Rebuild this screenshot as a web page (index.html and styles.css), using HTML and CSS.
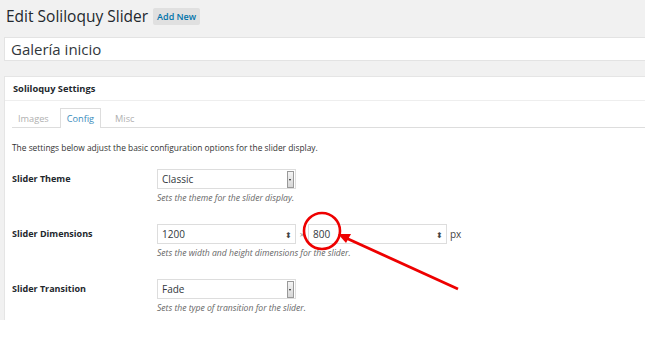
FILE: index.html
```html
<!DOCTYPE html>
<html>
<head>
<meta charset="utf-8">
<link rel="stylesheet" href="styles.css">
</head>
<body>
<div class="screen">
  <div class="wrap">
    <div class="heading">
      <h1 class="title">Edit Soliloquy Slider</h1>
      <span class="add-new">Add New</span>
    </div>
    <div class="title-field">Galería inicio</div>
    <div class="postbox">
      <div class="postbox-head">Soliloquy Settings</div>
      <div class="postbox-body">
        <div class="tabs">
          <span class="tab">Images</span>
          <span class="tab tab-active">Config</span>
          <span class="tab">Misc</span>
        </div>
        <p class="intro">The settings below adjust the basic configuration options for the slider display.</p>
        <div class="row">
          <div class="label">Slider Theme</div>
          <div class="field">
            <div class="select"><span>Classic</span><span class="select-btn"></span></div>
            <div class="desc">Sets the theme for the slider display.</div>
          </div>
        </div>
        <div class="row">
          <div class="label">Slider Dimensions</div>
          <div class="field">
            <div class="dims">
              <div class="number"><span>1200</span><span class="spin">⬍</span></div>
              <span class="times">×</span>
              <div class="number"><span>800</span><span class="spin">⬍</span></div>
              <span class="unit">px</span>
            </div>
            <div class="desc">Sets the width and height dimensions for the slider.</div>
          </div>
        </div>
        <div class="row">
          <div class="label">Slider Transition</div>
          <div class="field">
            <div class="select"><span>Fade</span><span class="select-btn"></span></div>
            <div class="desc">Sets the type of transition for the slider.</div>
          </div>
        </div>
      </div>
    </div>
  </div>
  <svg class="annot" width="645" height="349" viewBox="0 0 645 349">
    <circle cx="322" cy="231" r="18" fill="none" stroke="#ee0000" stroke-width="2.6"/>
    <line x1="458" y1="289" x2="346" y2="238" stroke="#ee0000" stroke-width="2.8"/>
    <polygon points="338,234 351,234 346,243" fill="#ee0000"/>
  </svg>
</div>
</body>
</html>
```
FILE: styles.css
```css
html, body {
  margin: 0;
  padding: 0;
  background: #ffffff;
}
.screen {
  position: relative;
  width: 645px;
  height: 349px;
  overflow: hidden;
  font-family: "Open Sans", "Liberation Sans", sans-serif;
  color: #222;
}
.wrap {
  width: 720px;
  height: 320px;
  overflow: hidden;
  background: #f1f1f1;
  padding-left: 4px;
  box-sizing: border-box;
}
.heading {
  display: flex;
  align-items: center;
  gap: 5px;
  height: 32px;
  padding-left: 2px;
}
.title {
  margin: 0;
  font-size: 15.5px;
  font-weight: 400;
  color: #23282d;
  line-height: 32px;
}
.add-new {
  background: #e0e0e0;
  color: #0073aa;
  font-size: 9px;
  font-weight: 600;
  padding: 3px 4px;
  border-radius: 2px;
  line-height: 11px;
}
.title-field {
  margin-top: 5px;
  height: 24px;
  box-sizing: border-box;
  background: #fff;
  border: 1px solid #e3e3e3;
  font-size: 15px;
  line-height: 22px;
  padding-left: 6px;
  color: #32373c;
}
.postbox {
  margin-top: 15px;
  background: #fff;
  border: 1px solid #e5e5e5;
  height: 300px;
}
.postbox-head {
  height: 23px;
  border-bottom: 1px solid #eee;
  font-size: 9.3px;
  font-weight: 700;
  line-height: 23px;
  padding-left: 8px;
  color: #23282d;
}
.postbox-body {
  padding: 0 0 0 7px;
}
.tabs {
  display: flex;
  align-items: flex-end;
  height: 26px;
  border-bottom: 1px solid #ddd;
  padding-left: 2px;
}
.tab {
  font-size: 9.2px;
  color: #b0b0b0;
  padding: 0 7px;
  height: 19px;
  line-height: 19px;
  box-sizing: border-box;
  border: 1px solid transparent;
  border-bottom: none;
}
.tab:first-child {
  padding-left: 3px;
  padding-right: 0;
  margin-right: 10px;
}
.tab-active {
  color: #3b8dbd;
  border-color: #ddd;
  background: #fff;
  margin-bottom: -1px;
  height: 20px;
  padding: 0 6px;
  margin-right: 6px;
}
.intro {
  margin: 13px 0 0 0;
  font-size: 8.4px;
  line-height: 13px;
  color: #333;
}
.row {
  display: flex;
  height: 55px;
  align-items: flex-start;
}
.intro + .row {
  margin-top: 15px;
}
.label {
  width: 145px;
  font-size: 9px;
  font-weight: 700;
  line-height: 20px;
  color: #23282d;
}
.field {
  display: flex;
  flex-direction: column;
}
.select {
  width: 139px;
  height: 20px;
  box-sizing: border-box;
  border: 1px solid #ddd;
  display: flex;
  align-items: center;
  justify-content: space-between;
  padding-left: 4px;
  font-size: 10px;
  color: #32373c;
}
.select-btn {
  width: 7px;
  height: 17px;
  margin-right: 1px;
  background: linear-gradient(#f4f4f4, #d6d6d6);
  border: 1px solid #999;
  box-sizing: border-box;
  position: relative;
}
.select-btn::after {
  content: "";
  position: absolute;
  left: 1px;
  top: 7px;
  border-left: 1.5px solid transparent;
  border-right: 1.5px solid transparent;
  border-top: 2px solid #222;
}
.desc {
  margin-top: 3px;
  font-size: 8.6px;
  font-style: italic;
  color: #666;
  line-height: 12px;
}
.dims {
  display: flex;
  align-items: center;
  height: 20px;
}
.number {
  width: 139px;
  height: 20px;
  box-sizing: border-box;
  border: 1px solid #ddd;
  display: flex;
  align-items: center;
  justify-content: space-between;
  padding-left: 4px;
  padding-right: 3px;
  font-size: 10px;
  color: #32373c;
}
.spin {
  font-size: 8px;
  color: #444;
}
.times {
  width: 12px;
  text-align: center;
  font-size: 9px;
  color: #999;
}
.unit {
  margin-left: 3px;
  font-size: 10px;
  color: #444;
}
.annot {
  position: absolute;
  left: 0;
  top: 0;
  pointer-events: none;
}
```
